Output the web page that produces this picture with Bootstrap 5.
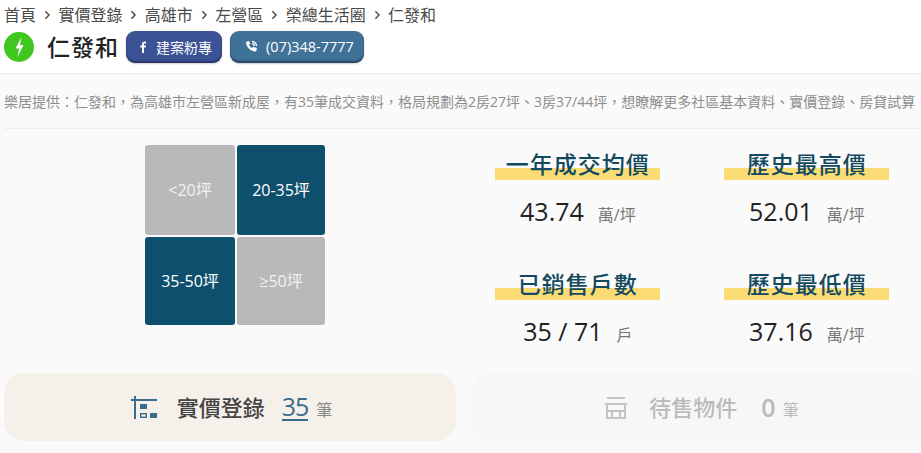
<!DOCTYPE html>
<html lang="zh-Hant">
<head>
    <meta charset="UTF-8">
    <meta name="viewport" content="width=device-width, initial-scale=1">
    <title>仁發和</title>
    <link href="https://cdn.jsdelivr.net/npm/bootstrap@5.3.0/dist/css/bootstrap.min.css" rel="stylesheet">
    <style>
        html, body { height: 453px; overflow: hidden; }
        body {
            font-family: "Open Sans", "Noto Sans CJK TC", sans-serif;
            background-color: #fff;
            color: #222;
        }
        .top-bar { padding: 4px 4px 0 4px; height: 74px; border-bottom: 1px solid #eee; }
        .crumbs { font-size: 16px; line-height: 22px; color: #4a4a4a; gap: 8px; }
        .crumb-sep { width: 6.4px; height: 10px; }
        .title-row { margin-top: 5px; height: 32px; }
        .bolt-icon { width: 30px; height: 30px; margin-right: 13px; }
        .site-name { font-size: 23px; font-weight: 500; margin: 0 7px 0 0; line-height: 32px; letter-spacing: 1px; color: #222; }
        .fan-btn, .tel-btn {
            height: 32px; border: 0; border-radius: 9px; color: #fff; font-size: 14px; padding: 0;
            box-shadow: inset 0 -2px 2px rgba(20, 30, 70, .55), 0 1px 2px rgba(0, 0, 0, .2);
        }
        .fan-btn { width: 96px; background: #3b5295; margin-right: 8px; }
        .tel-btn { width: 134px; background: #3f7296; padding-left: 4px; font-size: 14.5px; }
        .btn-glyph { width: 14px; height: 14px; margin-right: 6px; }
        .tel-btn .btn-glyph { margin-right: 8px; }
        .page-body { background: #fafafa; height: 379px; padding: 0 4px; }
        .intro-text {
            height: 55px; line-height: 55px; font-size: 14px; color: #8e8e8e; white-space: nowrap; overflow: hidden;
            border-bottom: 1px solid #eee; margin-right: -4px;
        }
        .main-row { height: 244px; }
        .size-side { width: 462px; padding-top: 16px; }
        .size-grid { width: 180px; height: 180px; display: grid; grid-template-columns: 90px 88px; grid-template-rows: 90px 88px; gap: 2px; margin-left: 141px; }
        .size-cell { border-radius: 3px; color: #fff; font-size: 16px; display: flex; align-items: center; justify-content: center; }
        .size-off { background: #b9b9b9; color: #f2f2f2; }
        .size-on { background: #0e4f6d; }
        .stat-side { width: 425px; margin-left: 33px; display: grid; grid-template-columns: 165px 165px; column-gap: 64px; grid-auto-rows: 120px; padding-top: 20px; }
        .stat-box { text-align: center; }
        .stat-label { font-size: 23px; font-weight: 500; line-height: 30px; color: #134a60; letter-spacing: 1px; background: linear-gradient(to bottom, transparent 19px, #fbdc74 19px, #fbdc74 31px, transparent 31px); height: 31px; }
        .stat-num { margin-top: 14px; line-height: 34px; font-size: 25px; font-weight: 500; color: #222; }
        .stat-unit { font-size: 16px; font-weight: 400; color: #777; margin-left: 14px; }
        .count-row { gap: 16px; margin-right: -30px; }
        .count-box { height: 68px; border-radius: 20px; font-size: 22px; font-weight: 500; padding-left: 3px; }
        .count-sold { width: 452px; background: #f5f1ea; color: #444; }
        .count-sale { width: 456px; background: #f7f7f7; color: #bbb; }
        .count-icon { margin-right: 19px; }
        .count-sold .count-icon { width: 27px; height: 23px; }
        .count-sale .count-icon { width: 24px; height: 23px; margin-right: 21px; }
        .count-num { font-size: 25px; letter-spacing: -1px; font-weight: 400; margin-left: 17px; line-height: 26px; }
        .count-sold .count-num { color: #3a6c8d; border-bottom: 2px solid #3a6c8d; }
        .count-sale .count-num { margin-left: 24px; font-weight: 600; }
        .count-unit { font-size: 16px; font-weight: 400; margin-left: 8px; margin-top: 6px; color: #888; }
        .count-sale .count-unit { color: #bbb; }
    </style>
</head>
<body>

    <!-- Header -->
    <div class="top-bar">
        <div class="crumbs d-flex align-items-center">
            <span>首頁</span>
            <svg class="crumb-sep" viewBox="0 0 7 10"><path d="M1.5 1l4 4-4 4" fill="none" stroke="#4a4a4a" stroke-width="1.6"/></svg>
            <span>實價登錄</span>
            <svg class="crumb-sep" viewBox="0 0 7 10"><path d="M1.5 1l4 4-4 4" fill="none" stroke="#4a4a4a" stroke-width="1.6"/></svg>
            <span>高雄市</span>
            <svg class="crumb-sep" viewBox="0 0 7 10"><path d="M1.5 1l4 4-4 4" fill="none" stroke="#4a4a4a" stroke-width="1.6"/></svg>
            <span>左營區</span>
            <svg class="crumb-sep" viewBox="0 0 7 10"><path d="M1.5 1l4 4-4 4" fill="none" stroke="#4a4a4a" stroke-width="1.6"/></svg>
            <span>榮總生活圈</span>
            <svg class="crumb-sep" viewBox="0 0 7 10"><path d="M1.5 1l4 4-4 4" fill="none" stroke="#4a4a4a" stroke-width="1.6"/></svg>
            <span>仁發和</span>
        </div>
        <div class="title-row d-flex align-items-center">
            <svg class="bolt-icon" viewBox="0 0 30 30">
                <circle cx="15" cy="15" r="15" fill="#3fc71f"/>
                <path d="M17.500 5l-6 11.500h3.500L13.500 25l6-12h-3.500z" fill="#fff"/>
            </svg>
            <h1 class="site-name">仁發和</h1>
            <button class="btn fan-btn d-flex align-items-center justify-content-center">
                <svg class="btn-glyph" viewBox="0 0 14 14"><path d="M8 13V7.600h1.700l.3-2H8V4.400c0-.6.2-1 1-1h1V1.600C9.700 1.500 9.200 1.500 8.700 1.500 7.100 1.500 6 2.500 6 4.200v1.400H4.300v2H6V13z" fill="#fff"/></svg>
                建案粉專
            </button>
            <button class="btn tel-btn d-flex align-items-center justify-content-center">
                <svg class="btn-glyph" viewBox="0 0 14 14"><path d="M3 1.500L5 1l1.200 2.800-1.200 1c.6 1.500 1.700 2.600 3.200 3.200l1-1.200L13 8l-.5 2.200c-.2.800-.9 1.300-1.700 1.200C6.500 11 3 7.500 2 3.200 1.900 2.400 2.300 1.700 3 1.500z" fill="#fff"/><path d="M8 1.500a4.500 4.500 0 0 1 4.500 4.500M8 3.700A2.300 2.300 0 0 1 10.300 6" fill="none" stroke="#fff" stroke-width="1.300"/></svg>
                (07)348-7777
            </button>
        </div>
    </div>

    <div class="page-body">
        <div class="intro-text">樂居提供：仁發和，為高雄市左營區新成屋，有35筆成交資料，格局規劃為2房27坪、3房37/44坪，想瞭解更多社區基本資料、實價登錄、房貸試算</div>

        <div class="main-row d-flex">
            <!-- Size grid -->
            <div class="size-side">
                <div class="size-grid">
                    <div class="size-cell size-off">&lt;20坪</div>
                    <div class="size-cell size-on">20-35坪</div>
                    <div class="size-cell size-on">35-50坪</div>
                    <div class="size-cell size-off">≥50坪</div>
                </div>
            </div>

            <!-- Stats -->
            <div class="stat-side">
                <div class="stat-box">
                    <div class="stat-label">一年成交均價</div>
                    <div class="stat-num">43.74<span class="stat-unit">萬/坪</span></div>
                </div>
                <div class="stat-box">
                    <div class="stat-label">歷史最高價</div>
                    <div class="stat-num">52.01<span class="stat-unit">萬/坪</span></div>
                </div>
                <div class="stat-box">
                    <div class="stat-label">已銷售戶數</div>
                    <div class="stat-num">35 / 71<span class="stat-unit">戶</span></div>
                </div>
                <div class="stat-box">
                    <div class="stat-label">歷史最低價</div>
                    <div class="stat-num">37.16<span class="stat-unit">萬/坪</span></div>
                </div>
            </div>
        </div>

        <!-- Counts -->
        <div class="count-row d-flex">
            <div class="count-box count-sold d-flex align-items-center justify-content-center">
                <svg class="count-icon" viewBox="0 0 27 23"><path d="M0 4h26M4 0v23" fill="none" stroke="#3a6c8d" stroke-width="2"/><rect x="9" y="8" width="7" height="5" fill="#3a6c8d"/><rect x="9.700" y="17.700" width="5.600" height="3.600" fill="none" stroke="#3a6c8d" stroke-width="1.400"/><rect x="19" y="17" width="7" height="5" fill="#3a6c8d"/></svg>
                實價登錄
                <span class="count-num">35</span>
                <span class="count-unit">筆</span>
            </div>
            <div class="count-box count-sale d-flex align-items-center justify-content-center">
                <svg class="count-icon" viewBox="0 0 24 23"><path d="M3 2h18M1 8h22M3 8v14h18V8M3 15h18M8 15v7h8v-7" fill="none" stroke="#c4c4c4" stroke-width="2"/></svg>
                待售物件
                <span class="count-num">0</span>
                <span class="count-unit">筆</span>
            </div>
        </div>
    </div>

    <script src="https://cdn.jsdelivr.net/npm/bootstrap@5.3.0/dist/js/bootstrap.bundle.min.js"></script>
</body>
</html>
